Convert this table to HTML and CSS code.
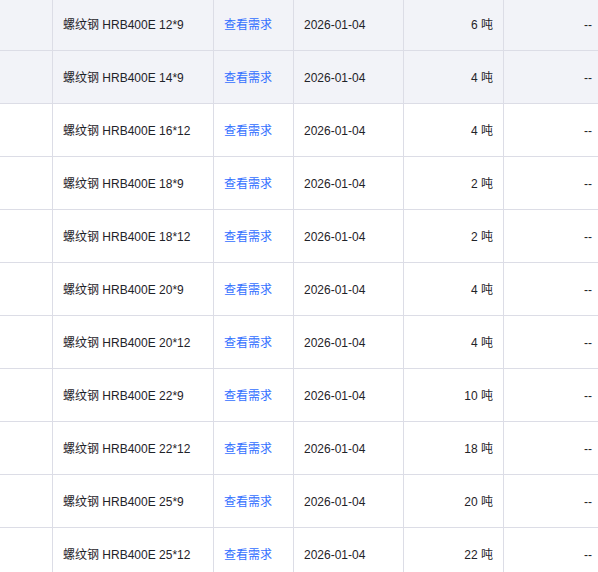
FILE: index.html
```html
<!DOCTYPE html>
<html lang="zh-CN">
<head>
<meta charset="utf-8">
<link rel="stylesheet" href="styles.css">
</head>
<body>
<div class="table">
  <div class="row hl"><div class="c c1"></div><div class="c c2">螺纹钢 HRB400E 12*9</div><div class="c c3"><a class="link">查看需求</a></div><div class="c c4">2026-01-04</div><div class="c c5">6 吨</div><div class="c c6">--</div></div>
  <div class="row hl"><div class="c c1"></div><div class="c c2">螺纹钢 HRB400E 14*9</div><div class="c c3"><a class="link">查看需求</a></div><div class="c c4">2026-01-04</div><div class="c c5">4 吨</div><div class="c c6">--</div></div>
  <div class="row"><div class="c c1"></div><div class="c c2">螺纹钢 HRB400E 16*12</div><div class="c c3"><a class="link">查看需求</a></div><div class="c c4">2026-01-04</div><div class="c c5">4 吨</div><div class="c c6">--</div></div>
  <div class="row"><div class="c c1"></div><div class="c c2">螺纹钢 HRB400E 18*9</div><div class="c c3"><a class="link">查看需求</a></div><div class="c c4">2026-01-04</div><div class="c c5">2 吨</div><div class="c c6">--</div></div>
  <div class="row"><div class="c c1"></div><div class="c c2">螺纹钢 HRB400E 18*12</div><div class="c c3"><a class="link">查看需求</a></div><div class="c c4">2026-01-04</div><div class="c c5">2 吨</div><div class="c c6">--</div></div>
  <div class="row"><div class="c c1"></div><div class="c c2">螺纹钢 HRB400E 20*9</div><div class="c c3"><a class="link">查看需求</a></div><div class="c c4">2026-01-04</div><div class="c c5">4 吨</div><div class="c c6">--</div></div>
  <div class="row"><div class="c c1"></div><div class="c c2">螺纹钢 HRB400E 20*12</div><div class="c c3"><a class="link">查看需求</a></div><div class="c c4">2026-01-04</div><div class="c c5">4 吨</div><div class="c c6">--</div></div>
  <div class="row"><div class="c c1"></div><div class="c c2">螺纹钢 HRB400E 22*9</div><div class="c c3"><a class="link">查看需求</a></div><div class="c c4">2026-01-04</div><div class="c c5">10 吨</div><div class="c c6">--</div></div>
  <div class="row"><div class="c c1"></div><div class="c c2">螺纹钢 HRB400E 22*12</div><div class="c c3"><a class="link">查看需求</a></div><div class="c c4">2026-01-04</div><div class="c c5">18 吨</div><div class="c c6">--</div></div>
  <div class="row"><div class="c c1"></div><div class="c c2">螺纹钢 HRB400E 25*9</div><div class="c c3"><a class="link">查看需求</a></div><div class="c c4">2026-01-04</div><div class="c c5">20 吨</div><div class="c c6">--</div></div>
  <div class="row"><div class="c c1"></div><div class="c c2">螺纹钢 HRB400E 25*12</div><div class="c c3"><a class="link">查看需求</a></div><div class="c c4">2026-01-04</div><div class="c c5">22 吨</div><div class="c c6">--</div></div>
</div>
</body>
</html>
```
FILE: styles.css
```css
html, body {
  margin: 0;
  padding: 0;
  background: #ffffff;
  overflow: hidden;
}
body {
  font-family: "Liberation Sans", Arial, "Noto Sans CJK SC", sans-serif;
  font-size: 12px;
  color: #1f2329;
}
.table {
  margin-top: -2px;
  width: 602px;
}
.row {
  display: flex;
  height: 53px;
  box-sizing: border-box;
  border-bottom: 1px solid #dcdde6;
  background: #ffffff;
}
.row.hl {
  background: #f2f3f8;
}
.c {
  box-sizing: border-box;
  border-right: 1px solid #dcdde6;
  padding: 1px 10px 0;
  display: flex;
  align-items: center;
  white-space: nowrap;
  line-height: 20px;
}
.c1 { width: 53px; }
.c2 { width: 161px; }
.c3 { width: 80px; }
.c4 { width: 110px; }
.c5 { width: 100px; justify-content: flex-end; }
.c6 { width: 98px; justify-content: flex-end; border-right: none; }
.link {
  color: #3370ff;
  text-decoration: none;
  cursor: pointer;
}
```
